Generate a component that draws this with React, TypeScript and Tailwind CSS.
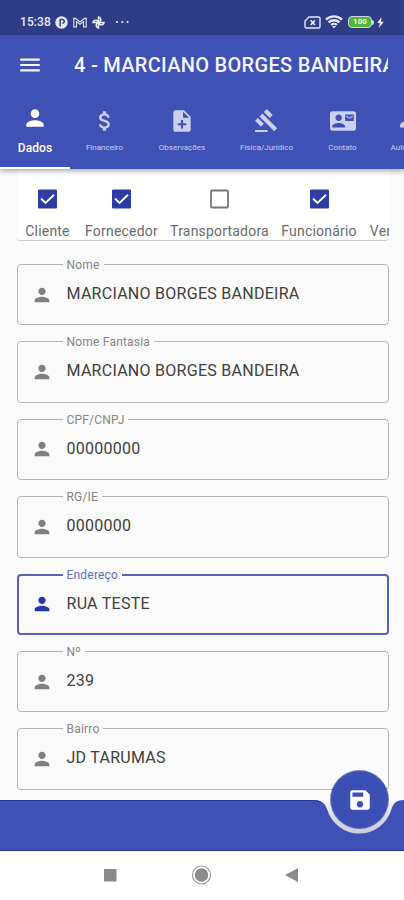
import type { ReactNode } from "react";
import {
  MdAttachMoney,
  MdContactMail,
  MdGavel,
  MdGroup,
  MdMenu,
  MdNoteAdd,
  MdPerson,
  MdSave,
} from "react-icons/md";

function StatusBar() {
  return (
    <div className="flex h-[35px] shrink-0 items-center bg-[#2f3d87] pt-[9px] pr-[20px] pl-[20px] text-[#e4e9fa]">
      <span className="w-[33px] text-[12px] font-medium tracking-[0.1px] whitespace-nowrap">15:38</span>
      <svg className="ml-[2px] h-[13px] w-[13px]" viewBox="0 0 13 13">
        <circle cx="6.5" cy="6.5" r="6.2" fill="currentColor" />
        <path d="M5.200 10.500V3.600h2.200a1.800 1.800 0 0 1 0 3.700" fill="none" stroke="#2f3d87" strokeWidth="1.500" />
      </svg>
      <svg className="ml-[5px] h-[11px] w-[14px]" viewBox="0 0 14 11" fill="none" stroke="currentColor" strokeWidth="1.1">
        <path d="M.8 10V1.4h1.6L7 5l4.6-3.6h1.6V10h-2.7V4.6L7 7.4 3.5 4.6V10z" />
      </svg>
      <svg className="ml-[5px] h-[13px] w-[13px]" viewBox="0 0 13 13" fill="none" stroke="currentColor" strokeWidth="1.5">
        <path d="M6.5 6.5V1a2.8 2.8 0 0 1 0 5.5h5.5a2.8 2.8 0 0 1-5.5 0V12a2.8 2.8 0 0 1 0-5.5H1a2.8 2.8 0 0 1 5.5 0" />
      </svg>
      <svg className="ml-[10px] h-[4px] w-[15px]" viewBox="0 0 15 4" fill="currentColor">
        <circle cx="2" cy="2" r="1.1" />
        <circle cx="7.3" cy="2" r="1.1" />
        <circle cx="12.6" cy="2" r="1.1" />
      </svg>
      <div className="ml-auto flex items-center">
        <svg className="h-[13px] w-[17px]" viewBox="0 0 17 13" fill="none" stroke="currentColor">
          <path d="M5 1h9.5a1.5 1.5 0 0 1 1.5 1.5v8a1.5 1.5 0 0 1-1.5 1.5h-12A1.5 1.5 0 0 1 1 10.500V5z" strokeWidth="1.4" />
          <path d="m6.700 4.400 4.200 4.600m0-4.600L6.700 9" strokeWidth="1.600" />
        </svg>
        <svg className="ml-[4px] h-[14px] w-[18px]" viewBox="0 0 18 14" fill="none" stroke="currentColor" strokeWidth="2.300">
          <path d="M1 4.600a11.500 11.500 0 0 1 16 0M3.600 7.400a7.800 7.800 0 0 1 10.800 0M6.200 10a4 4 0 0 1 5.600 0" />
          <path d="m7 11 2 2.500L11 11z" fill="currentColor" stroke="none" />
        </svg>
        <div className="ml-[5px] flex h-[12px] w-[24px] items-center justify-center rounded-[4px] border-[1.5px] border-[#ccd6e6] bg-[#54b637] text-[8px] leading-none font-bold text-[#effbe8]">
          100
        </div>
        <div className="h-[5px] w-[2px] rounded-r-sm bg-[#ccd6e6]" />
        <svg className="ml-[3px] h-[11px] w-[7px]" viewBox="0 0 7 11" fill="currentColor">
          <path d="M4.500 0 .2 6h2.600L2 11l4.800-6.300H4z" />
        </svg>
      </div>
    </div>
  );
}

function Tab({
  icon,
  label,
  width,
  active = false,
}: {
  icon: ReactNode;
  label: string;
  width: string;
  active?: boolean;
}) {
  return (
    <div
      className={`flex shrink-0 flex-col items-center pt-[10px] ${width} ${
        active ? "border-b-2 border-white text-white" : "text-[#c9d0f0]"
      }`}
    >
      <div className="flex h-[27px] items-center">{icon}</div>
      <span
        className={`mt-[8px] flex h-[18px] items-center whitespace-nowrap ${
          active ? "text-[12px] font-medium tracking-[0.1px]" : "text-[8px]"
        }`}
      >
        {label}
      </span>
    </div>
  );
}

function Option({ label, width, checked = false }: { label: string; width: string; checked?: boolean }) {
  return (
    <div className={`flex shrink-0 flex-col items-center ${width}`}>
      <svg className="mt-[19px] h-[20px] w-[19px] shrink-0" viewBox="0 -0.500 19 20" fill="none">
        {checked ? (
          <>
            <rect width="19" height="19" rx="1" fill="#2b3ca5" />
            <path d="m3 9 4.500 4.500L16 5.200" stroke="#fff" strokeWidth="1.900" />
          </>
        ) : (
          <rect x="1" y="1" width="17" height="17" rx="1" stroke="#777" strokeWidth="1.800" />
        )}
      </svg>
      <span className="mt-[13px] text-[14px] leading-[18px] tracking-[0.200px] whitespace-nowrap text-[#6a6a6a]">
        {label}
      </span>
    </div>
  );
}

function Field({ label, value, focused = false }: { label: string; value: string; focused?: boolean }) {
  return (
    <div
      className={`relative flex h-[61.400px] shrink-0 items-center rounded-[4px] ${
        focused ? "border-2 border-[#5262bd] pl-[12px]" : "border border-[#b5b5b5] pl-[13px]"
      }`}
    >
      <span
        className={`absolute bg-[#fafafa] px-[4px] text-[12px] leading-[14px] tracking-[0.200px] whitespace-nowrap ${
          focused ? "-top-[8px] left-[43.500px] text-[#5f6ec4]" : "-top-[7px] left-[44.500px] text-[#858585]"
        }`}
      >
        {label}
      </span>
      <MdPerson className={`h-[22px] w-[22px] ${focused ? "text-[#2337a8]" : "text-[#808080]"}`} />
      <span className="ml-[13.500px] pb-[1.400px] text-[16px] leading-[20px] tracking-[0.270px] whitespace-nowrap text-[#404040]">
        {value}
      </span>
    </div>
  );
}

const fields = [
  { label: "Nome", value: "MARCIANO BORGES BANDEIRA" },
  { label: "Nome Fantasia", value: "MARCIANO BORGES BANDEIRA" },
  { label: "CPF/CNPJ", value: "00000000" },
  { label: "RG/IE", value: "0000000" },
  { label: "Endereço", value: "RUA TESTE", focused: true },
  { label: "Nº", value: "239" },
  { label: "Bairro", value: "JD TARUMAS" },
];

export default function App() {
  return (
    <div className="flex h-[900px] w-[404px] flex-col overflow-hidden bg-[#fafafa] font-[Roboto,sans-serif]">
      <StatusBar />
      <header className="z-10 h-[134px] shrink-0 bg-[#3f51b5] shadow-[0_2px_5px_rgba(0,0,0,0.35)]">
        <div className="flex h-[59px] items-center pr-[16px] pl-[16.500px] text-[#f4f5ff]">
          <MdMenu className="h-[26px] w-[26px] shrink-0" />
          <h1 className="ml-[31.500px] min-w-0 flex-1 overflow-hidden text-[20px] font-medium tracking-[0.300px] whitespace-nowrap">
            4 - MARCIANO BORGES BANDEIRA
          </h1>
        </div>
        <nav className="flex h-[75px] overflow-hidden">
          <Tab active width="w-[70px]" label="Dados" icon={<MdPerson className="h-[26px] w-[26px]" />} />
          <Tab width="w-[69px]" label="Financeiro" icon={<MdAttachMoney className="mt-[6px] h-[26px] w-[26px]" />} />
          <Tab width="w-[86px]" label="Observações" icon={<MdNoteAdd className="mt-[6px] h-[26px] w-[26px]" />} />
          <Tab width="w-[83px]" label="Física/Jurídico" icon={<MdGavel className="mt-[6px] h-[25px] w-[25px]" />} />
          <Tab width="w-[69px]" label="Contato" icon={<MdContactMail className="mt-[6px] h-[26px] w-[26px]" />} />
          <Tab width="w-[70px]" label="Autorizados" icon={<MdGroup className="mt-[5px] h-[26px] w-[26px]" />} />
        </nav>
      </header>
      <main className="flex h-[631px] shrink-0 flex-col overflow-hidden pr-[15px] pl-[17px]">
        <div className="flex h-[72px] shrink-0 overflow-hidden rounded-b-[4px] border-b border-[#ccc] bg-white pt-px">
          <Option checked width="w-[61px]" label="Cliente" />
          <Option checked width="w-[87px]" label="Fornecedor" />
          <Option width="w-[109px]" label="Transportadora" />
          <Option checked width="w-[90px]" label="Funcionário" />
          <Option width="w-[73px]" label="Vendedor" />
        </div>
        <div className="mt-[23px] flex flex-col gap-[16px]">
          {fields.map((field) => (
            <Field key={field.label} {...field} />
          ))}
        </div>
      </main>
      <footer className="relative h-[51px] shrink-0">
        <svg className="block h-[51px] w-[404px]" viewBox="0 0 404 51">
          <defs>
            <linearGradient id="notch" x1="0" y1="0" x2="0" y2="1">
              <stop offset="0" stopColor="#fafafa" />
              <stop offset="0.500" stopColor="#d6d8e6" />
              <stop offset="1" stopColor="#cbcad9" />
            </linearGradient>
          </defs>
          <rect x="312" width="92" height="36" fill="url(#notch)" />
          <path
            d="M0 0h313c8 0 12 3 14 9a33.500 33.500 0 0 0 64.500 0c2-6 5-9 12.500-9v51H0z"
            fill="#3f51b5"
          />
          <path d="M0 .5h313c4 0 7 1 9 2.500M0 50.400h404" fill="none" stroke="#2138a1" />
        </svg>
        <button className="absolute -top-[29px] left-[331px] flex h-[57px] w-[57px] items-center justify-center rounded-full bg-[#3c4fb5] text-white shadow-[0_0_0_1px_rgba(25,48,155,0.6)]">
          <MdSave className="h-[26px] w-[26px]" />
        </button>
      </footer>
      <div className="flex h-[49px] shrink-0 items-center bg-white pb-px pl-[103px]">
        <svg className="h-[24px] w-[198px]" viewBox="0 0 198 24" fill="#8b8b8b">
          <path d="M1 6h12.500v12.500H1zM195 5v14l-13-7z" />
          <circle cx="98.500" cy="12" r="9" fill="none" stroke="#999" strokeWidth="1.200" />
          <circle cx="98.500" cy="12" r="6.700" />
        </svg>
      </div>
    </div>
  );
}
